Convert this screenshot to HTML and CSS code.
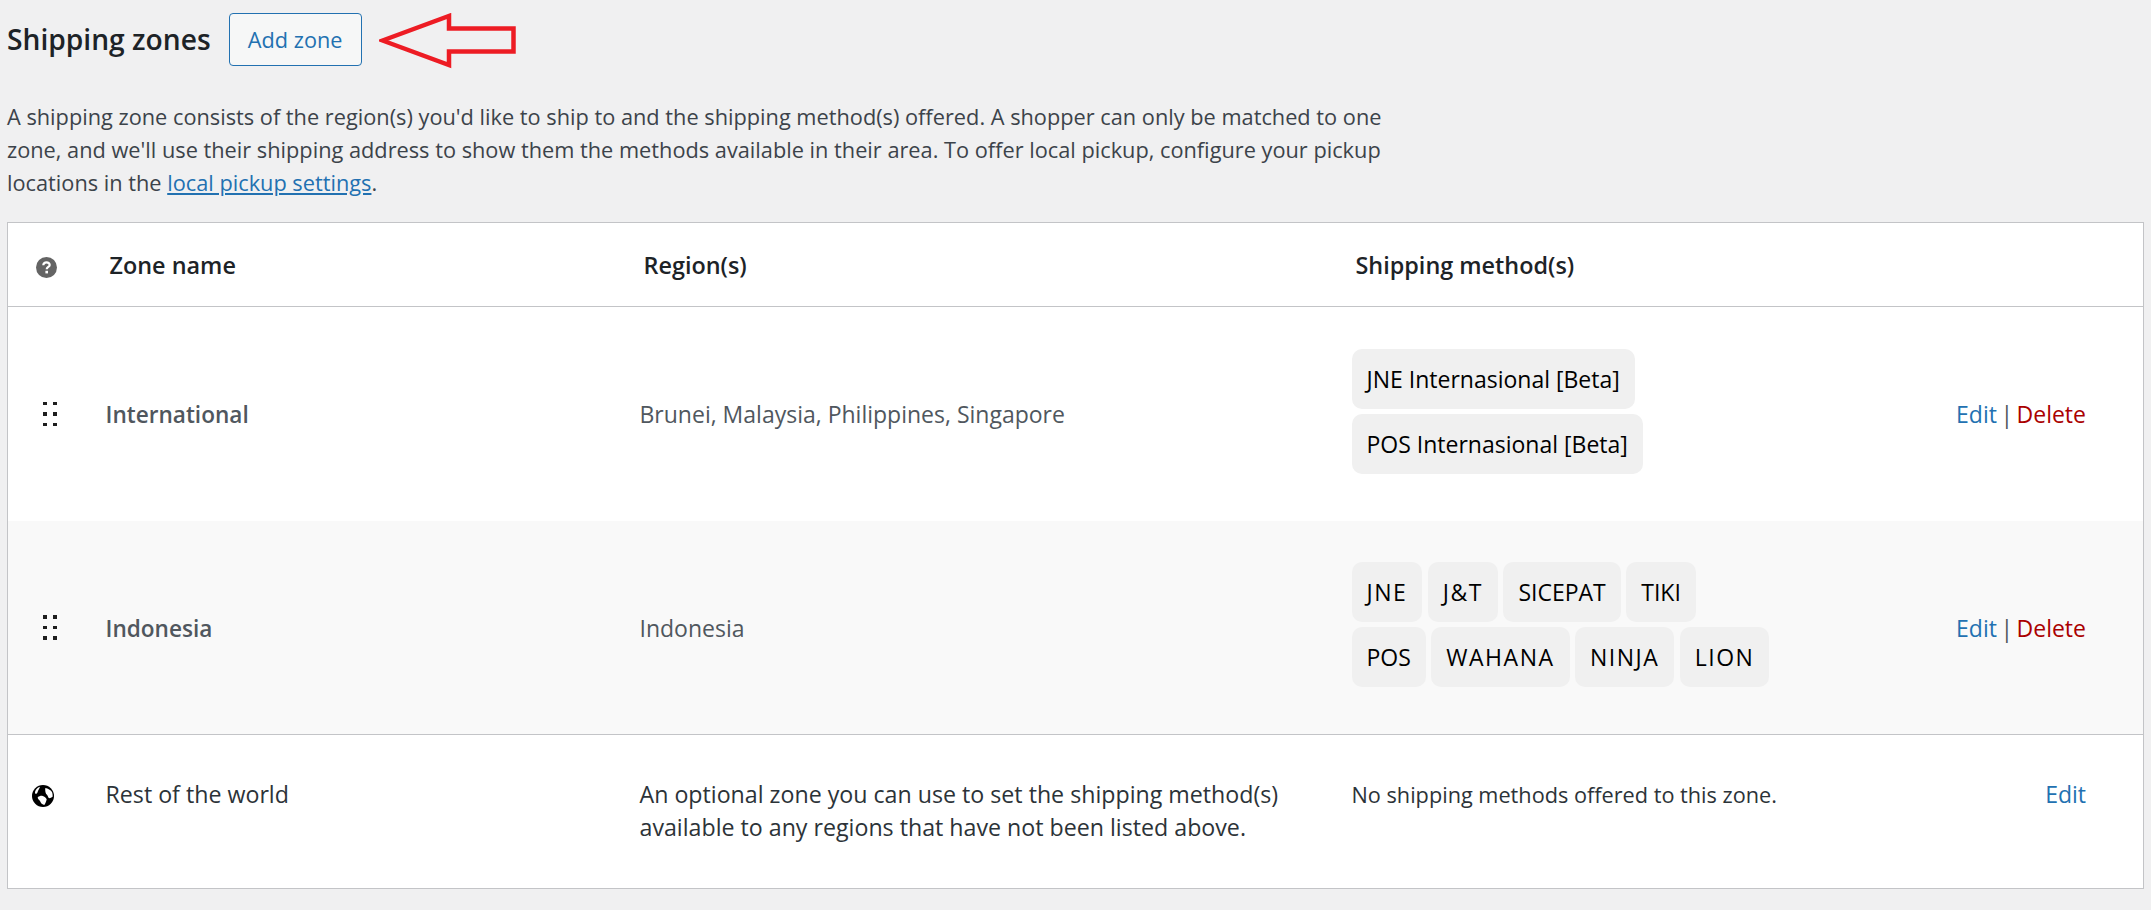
FILE: index.html
```html
<!DOCTYPE html>
<html lang="en">
<head>
<meta charset="utf-8">
<title>Shipping zones</title>
<link rel="stylesheet" href="styles.css">
</head>
<body>
<div class="topbar">
  <h2 class="title">Shipping zones</h2>
  <a class="add-btn" href="#">Add zone</a>
  <svg class="arrow" width="140" height="56" viewBox="0 0 140 56" aria-hidden="true">
    <path d="M3.500 27.500 L70 3 V15.500 H134.500 V38.500 H70 V52 Z" fill="none" stroke="#ed1c24" stroke-width="4.500"/>
  </svg>
</div>
<p class="intro">A shipping zone consists of the region(s) you'd like to ship to and the shipping method(s) offered. A shopper can only be matched to one zone, and we'll use their shipping address to show them the methods available in their area. To offer local pickup, configure your pickup locations in the <a href="#">local pickup settings</a>.</p>
<table class="zones">
  <colgroup><col class="c-icon"><col class="c-name"><col class="c-region"><col class="c-method"><col class="c-act"></colgroup>
  <thead>
    <tr>
      <th class="cell-icon">
        <svg class="help" width="21" height="21" viewBox="0 0 21 21" aria-hidden="true">
          <circle cx="10.500" cy="10.500" r="10.500" fill="#646464"/>
          <path d="M7.300 8.200 C7.300 6.300 8.700 5.300 10.500 5.300 C12.400 5.300 13.700 6.400 13.700 7.900 C13.700 9.900 10.700 10 10.700 12.300" fill="none" stroke="#fff" stroke-width="2.200"/>
          <rect x="9.400" y="13.800" width="2.600" height="2.600" fill="#fff"/>
        </svg>
      </th>
      <th>Zone name</th>
      <th>Region(s)</th>
      <th>Shipping method(s)</th>
      <th></th>
    </tr>
  </thead>
  <tbody>
    <tr class="row-a">
      <td class="cell-icon"><span class="dots"><i></i><i></i><i></i><i></i><i></i><i></i></span></td>
      <td class="name">International</td>
      <td class="region">Brunei, Malaysia, Philippines, Singapore</td>
      <td class="methods">
        <div class="chips"><span class="chip">JNE Internasional [Beta]</span><span class="chip">POS Internasional [Beta]</span></div>
      </td>
      <td class="actions"><a href="#">Edit</a> <span class="sep">|</span> <a class="del" href="#">Delete</a></td>
    </tr>
    <tr class="row-b">
      <td class="cell-icon"><span class="dots"><i></i><i></i><i></i><i></i><i></i><i></i></span></td>
      <td class="name">Indonesia</td>
      <td class="region">Indonesia</td>
      <td class="methods">
        <div class="chips"><span class="chip chip-wide">JNE</span><span class="chip chip-wide">J&amp;T</span><span class="chip">SICEPAT</span><span class="chip">TIKI</span><span class="chip">POS</span><span class="chip chip-wide">WAHANA</span><span class="chip chip-wide">NINJA</span><span class="chip chip-wide">LION</span></div>
      </td>
      <td class="actions"><a href="#">Edit</a> <span class="sep">|</span> <a class="del" href="#">Delete</a></td>
    </tr>
    <tr class="row-c">
      <td class="cell-globe">
        <svg class="globe" width="22" height="22" viewBox="0 0 22 22" aria-hidden="true">
          <circle cx="11" cy="11" r="11" fill="#000"/>
          <path d="M8 1.800 C5.500 2.600 3.600 4.500 3 7 C3 8 3.200 8.800 4 9 C5 8.600 5.600 7.600 5.800 6.600 C6.200 5 7.600 3.600 8 1.800 Z" fill="#fff"/>
          <path d="M5.700 12.300 C7.500 11 9 10.500 10.700 11 C12.500 11.800 14 12.500 14.700 14.300 C14.300 16.500 13.500 18.500 12.300 20 C10.500 19.500 9.500 18.800 9 18 C8.600 16.500 7.500 15.500 6.800 14.800 C6 14 5.700 13.200 5.700 12.300 Z" fill="#fff"/>
          <path d="M13.300 3 C16 3.400 18.600 5 20 7 C20.600 8.600 20.800 10.500 20.600 11.800 C19.200 12.800 17.800 13.400 16.700 13 C16 11.500 15.400 10 14.200 9 C13.400 7.600 13 5 13.300 3 Z" fill="#fff"/>
        </svg>
      </td>
      <td class="world">Rest of the world</td>
      <td class="world">An optional zone you can use to set the shipping method(s) available to any regions that have not been listed above.</td>
      <td class="none">No shipping methods offered to this zone.</td>
      <td class="actions"><a href="#">Edit</a></td>
    </tr>
  </tbody>
</table>
</body>
</html>
```
FILE: styles.css
```css
* { box-sizing: border-box; }
html, body { margin: 0; padding: 0; }
body {
  background: #f0f0f1;
  color: #3c434a;
  font-family: "Open Sans", "Noto Sans", "Liberation Sans", sans-serif;
  font-size: 23px;
  line-height: 33px;
  padding: 13px 8px 0 7px;
  min-height: 910px;
}
a { color: #2271b1; text-decoration: none; }

.topbar { display: flex; align-items: center; height: 53px; }
.title { margin: 0; font-size: 28.200px; line-height: 53px; font-weight: 600; color: #1d2327; }
.add-btn {
  margin-left: 18px;
  display: flex; align-items: center; justify-content: center;
  width: 133px; height: 53px;
  border: 1.5px solid #2271b1; border-radius: 4px;
  background: #f6f7f7; color: #2271b1; font-size: 21.700px;
}
.arrow { margin-left: 17px; margin-top: 3.500px; flex: none; }

.intro { margin: 34px 0 23px; max-width: 1395px; font-size: 21.750px; color: #3c434a; }
.intro a { text-decoration: underline; }

.zones {
  width: 2136px; table-layout: fixed; border-collapse: collapse;
  background: #fff; border: 1.5px solid #c3c4c7;
}
.c-icon { width: 78px; }
.c-name { width: 534px; }
.c-region { width: 712px; }
.c-method { width: 560px; }
.c-act { width: 252px; }

.zones th {
  height: 84px; padding: 2px 21px 0 24px; text-align: left; font-size: 23.400px;
  font-weight: 600; color: #1d2327; border-bottom: 1.5px solid #c3c4c7;
}
.zones td { padding: 2px 21px 0 20px; vertical-align: middle; }
.zones th.cell-icon { padding: 6px 0 0 28px; }
.zones td.cell-icon { padding: 0 0 0 35px; }

.row-a td { height: 214px; }
.row-b td { height: 214px; background: #f9f9f9; border-bottom: 1.5px solid #c3c4c7; }
.row-c td { height: 154px; vertical-align: top; padding-top: 44px; color: #2c3338; }
.zones .row-c .cell-globe { padding: 50px 0 0 24px; }
.zones .row-c .world { padding-top: 43px; font-size: 23.200px; }
.zones .row-c .none { padding-top: 43px; font-size: 21.700px; }
.zones .methods { padding-top: 0; }

.zones .name { font-size: 22.600px; font-weight: 600; color: #50575e; }
.region { color: #50575e; }

.dots { display: grid; grid-template-columns: 3.500px 3.500px; column-gap: 6.500px; row-gap: 7px; width: 14px; }
.dots i { display: block; width: 3.500px; height: 3.500px; background: #1e1e1e; }

.chips { display: flex; flex-wrap: wrap; gap: 5px 5.500px; max-width: 420px; margin-bottom: 5px; }
.chip {
  display: block; height: 60px; line-height: 60px; padding: 0 15px;
  background: #f0f0f0; border-radius: 10px; color: #000; white-space: nowrap;
}
.chip-wide { letter-spacing: 1.500px; }
.zones td.actions { text-align: right; padding: 2px 57px 0 0; white-space: nowrap; word-spacing: -2.500px; }
.zones .row-c td.actions { padding-top: 43px; }
.del { color: #a00; }
.sep { color: #50575e; }
.help, .globe { display: block; }
```
